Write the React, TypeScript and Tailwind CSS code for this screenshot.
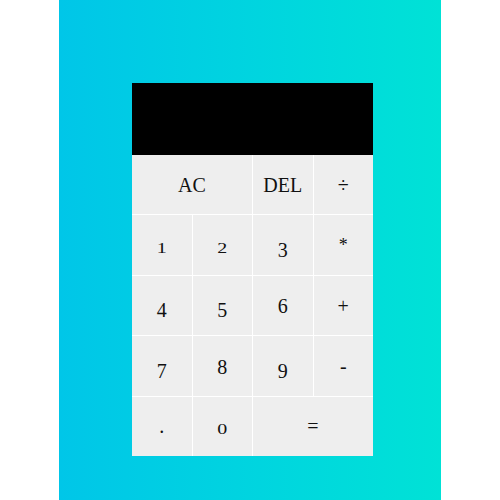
import React from 'react';

// shift / size tweaks so the digits read like old-style figures
const keys: { label: string; span?: boolean; cls?: string }[] = [
  { label: 'AC', span: true },
  { label: 'DEL' },
  { label: '÷' },
  { label: '1', cls: 'scale-y-[0.76] translate-y-[3px]' },
  { label: '2', cls: 'scale-y-[0.76] translate-y-[3px]' },
  { label: '3', cls: 'translate-y-[5px]' },
  { label: '*', cls: 'text-[18px]' },
  { label: '4', cls: 'translate-y-[5px]' },
  { label: '5', cls: 'translate-y-[5px]' },
  { label: '6', cls: 'translate-y-[1px]' },
  { label: '+', cls: 'translate-y-[1px]' },
  { label: '7', cls: 'translate-y-[5px]' },
  { label: '8', cls: 'translate-y-[1px]' },
  { label: '9', cls: 'translate-y-[5px]' },
  { label: '-' },
  { label: '.' },
  { label: '0', cls: 'scale-y-[0.76] translate-y-[3px]' },
  { label: '=', span: true },
];

export default function App() {
  return (
    <div className="w-[500px] h-[500px] bg-white">
      <div className="w-[382px] h-[500px] ml-[59px] bg-gradient-to-r from-[#00c6e8] to-[#00e2d6] pt-[83px]">
        <div className="ml-[73px] w-[241px]" style={{ fontFamily: '"Liberation Serif", "DejaVu Serif", serif' }}>
          {/* display */}
          <div className="h-[72px] bg-black"></div>
          <div className="grid grid-cols-4 grid-rows-5 gap-px h-[301px] bg-white">
            {keys.map((k) => (
              <button
                key={k.label}
                className={
                  (k.span ? 'col-span-2 ' : '') +
                  'bg-[#eeeeee] text-[20px] text-[#111] flex items-center justify-center leading-none'
                }
              >
                <span className={'inline-block ' + (k.cls ?? '')}>{k.label}</span>
              </button>
            ))}
          </div>
        </div>
      </div>
    </div>
  );
}
